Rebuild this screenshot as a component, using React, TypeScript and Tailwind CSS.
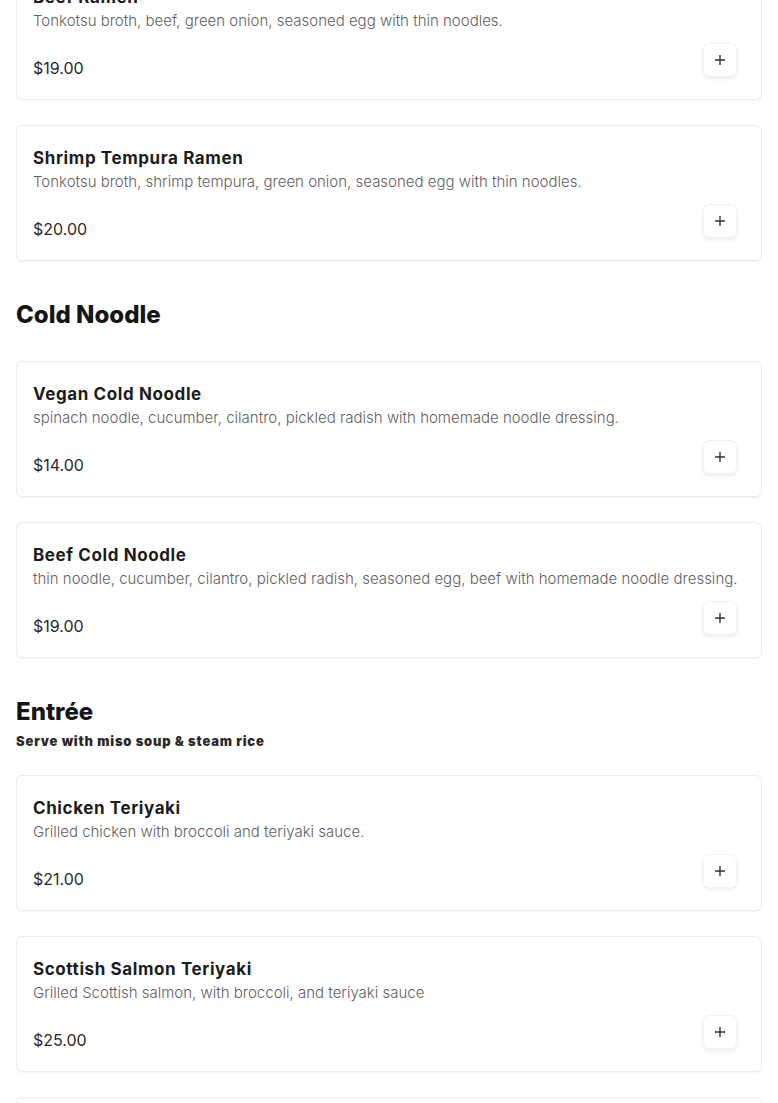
import React from "react";

type Item = { name: string; desc: string; price: string };

const PlusIcon = () => (
  <svg width="12" height="12" viewBox="0 0 12 12" fill="none">
    <path d="M6 1v10M1 6h10" stroke="#333" strokeWidth="1.4" />
  </svg>
);

const Card = ({ item }: { item: Item }) => (
  <div className="h-[136px] rounded-[6px] border border-[#ececec] bg-white shadow-[0_1px_2px_rgba(0,0,0,0.04)] pt-[20px] pl-4 pr-6 pb-[19px] flex flex-col">
    <div className="text-[17px] leading-6 font-bold text-[#1c1c1c] tracking-[0.6px]">{item.name}</div>
    <div className="text-[15px] leading-6 font-light text-[#5f5f5f] whitespace-nowrap">{item.desc}</div>
    <div className="mt-[10px] flex items-end justify-between">
      <div className="text-[16px] leading-6 text-[#2a2a2a]">{item.price}</div>
      <button className="mb-[3px] w-[34px] h-[34px] rounded-[6px] bg-white border border-[#f2f2f2] shadow-[0_2px_4px_rgba(0,0,0,0.07)] flex items-center justify-center">
        <PlusIcon />
      </button>
    </div>
  </div>
);

const ramen: Item[] = [
  { name: "Beef Ramen", desc: "Tonkotsu broth, beef, green onion, seasoned egg with thin noodles.", price: "$19.00" },
  { name: "Shrimp Tempura Ramen", desc: "Tonkotsu broth, shrimp tempura, green onion, seasoned egg with thin noodles.", price: "$20.00" },
];
const cold: Item[] = [
  { name: "Vegan Cold Noodle", desc: "spinach noodle, cucumber, cilantro, pickled radish with homemade noodle dressing.", price: "$14.00" },
  { name: "Beef Cold Noodle", desc: "thin noodle, cucumber, cilantro, pickled radish, seasoned egg, beef with homemade noodle dressing.", price: "$19.00" },
];
const entree: Item[] = [
  { name: "Chicken Teriyaki", desc: "Grilled chicken with broccoli and teriyaki sauce.", price: "$21.00" },
  { name: "Scottish Salmon Teriyaki", desc: "Grilled Scottish salmon, with broccoli, and teriyaki sauce", price: "$25.00" },
  { name: "Beef Teriyaki", desc: "Grilled beef with broccoli and teriyaki sauce.", price: "$23.00" },
];

export default function App() {
  return (
    <div className="w-[778px] h-[1103px] overflow-hidden bg-white" style={{ fontFamily: "Inter, 'Noto Sans', sans-serif" }}>
      <div className="-mt-[36px] px-4">
        <div className="flex flex-col gap-[25px]">
          {ramen.map((i) => <Card key={i.name} item={i} />)}
        </div>
        <h2 className="mt-[38px] text-[24px] leading-8 font-extrabold text-[#151515]">Cold Noodle</h2>
        <div className="mt-[30px] flex flex-col gap-[25px]">
          {cold.map((i) => <Card key={i.name} item={i} />)}
        </div>
        <h2 className="mt-[38px] text-[24px] leading-8 font-extrabold text-[#151515]">Entrée</h2>
        <div className="mt-[3px] text-[13px] leading-5 font-black text-[#2a2a2a] tracking-[0.8px]">Serve with miso soup &amp; steam rice</div>
        <div className="mt-[24px] flex flex-col gap-[25px]">
          {entree.map((i) => <Card key={i.name} item={i} />)}
        </div>
      </div>
    </div>
  );
}
